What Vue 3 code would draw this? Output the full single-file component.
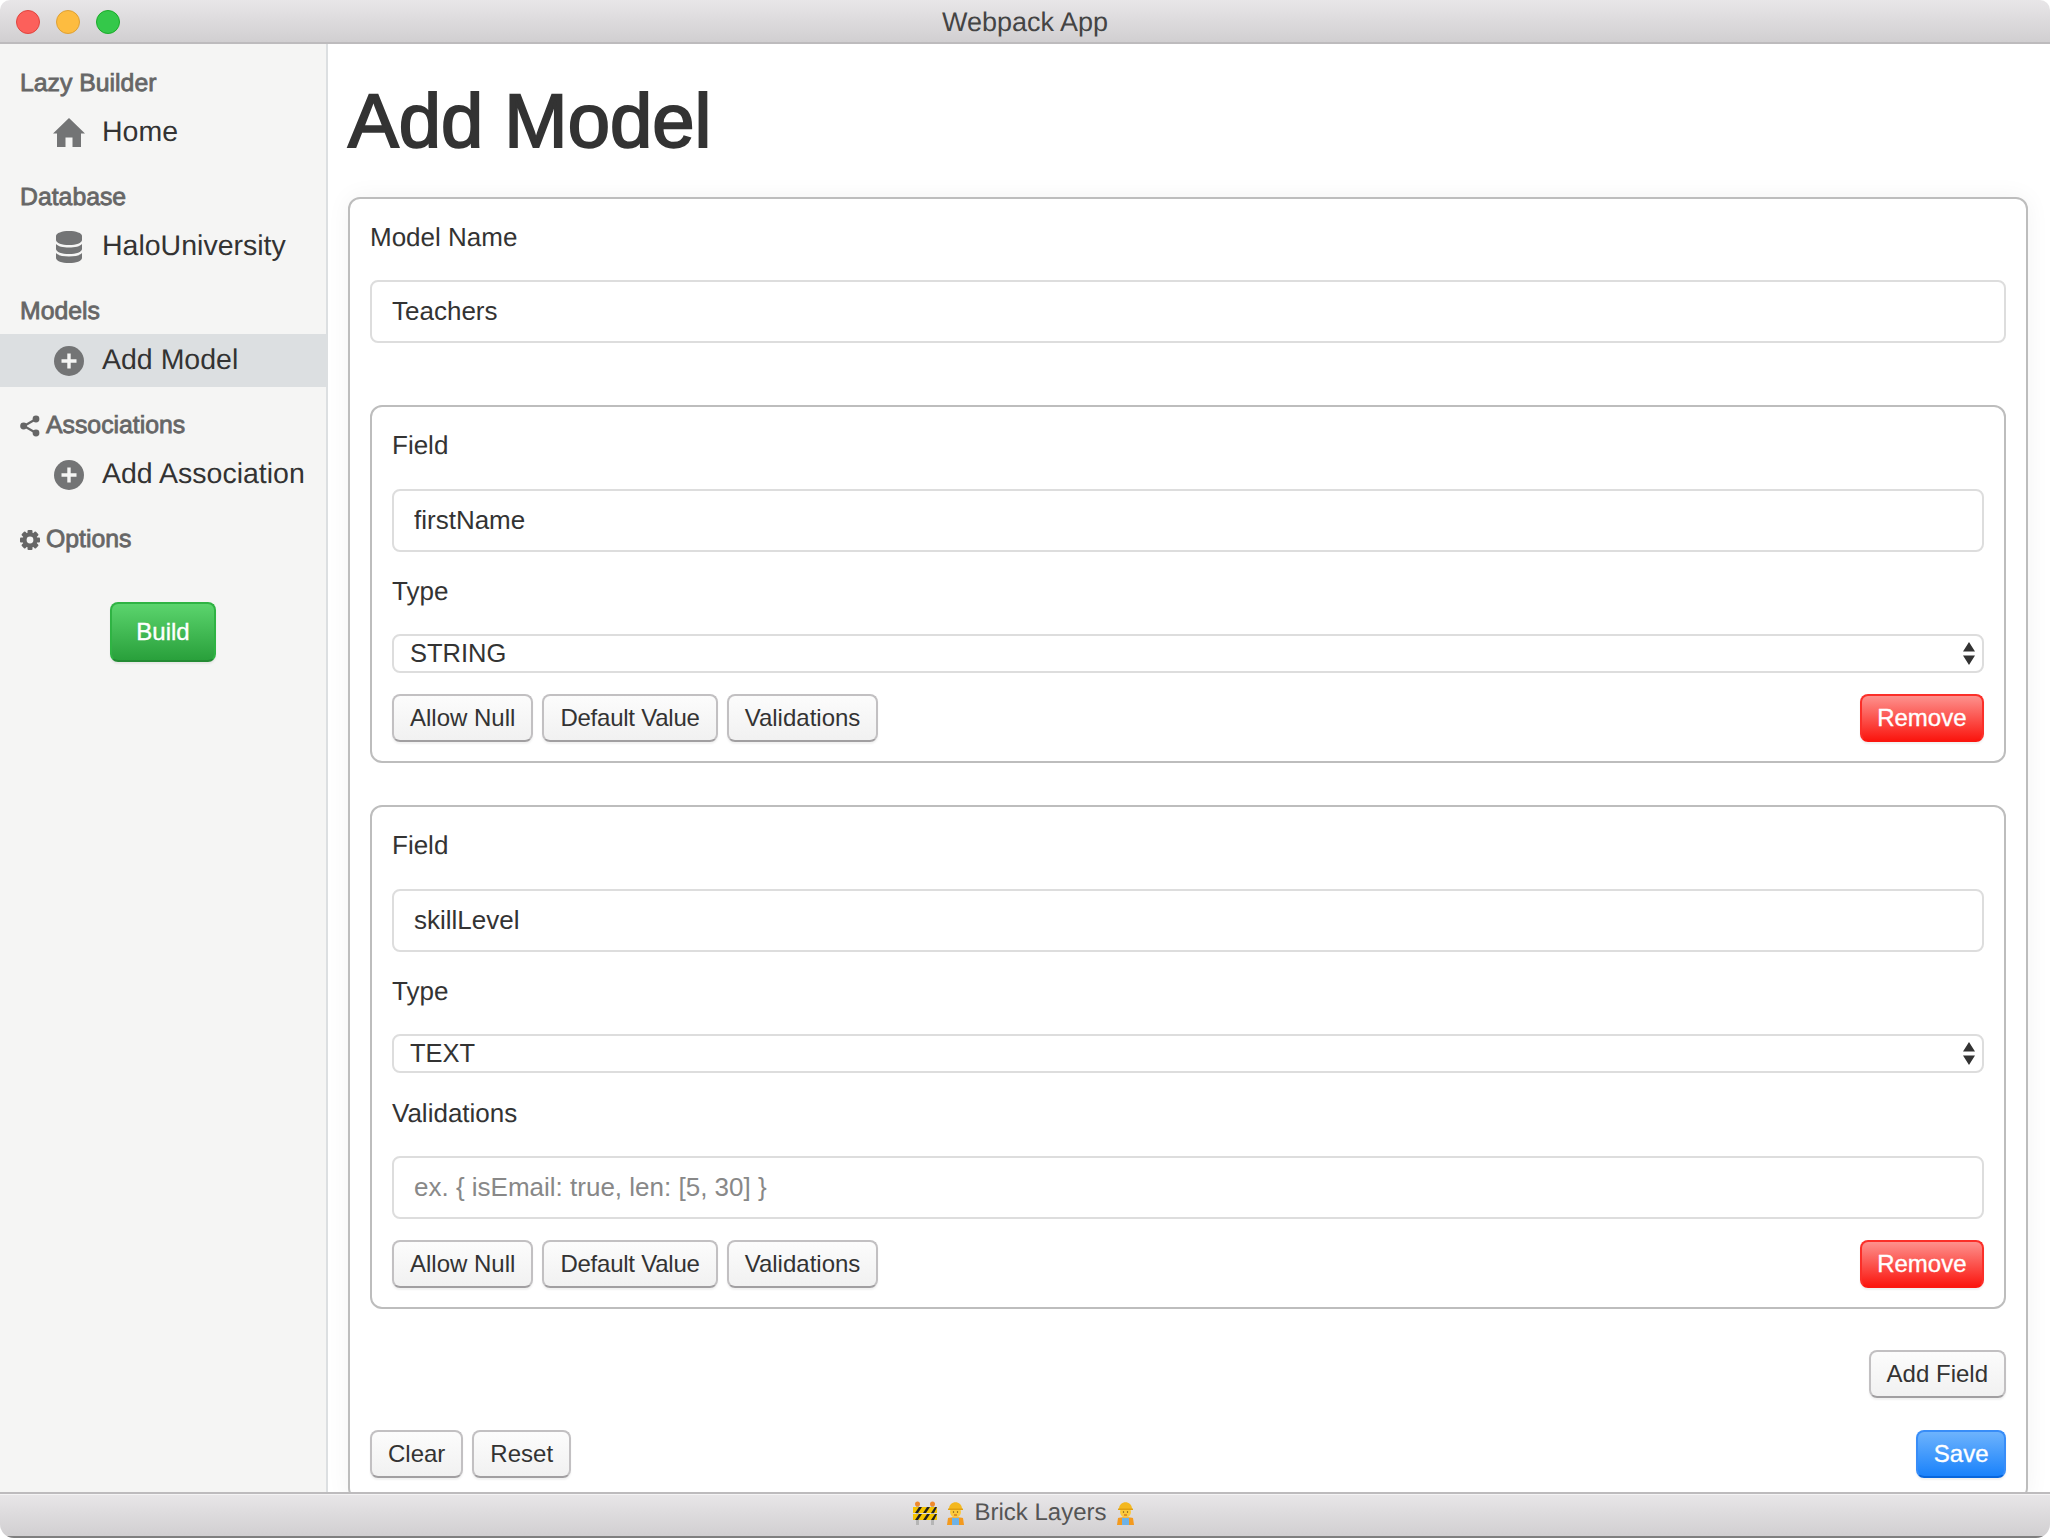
<script setup>
const groups = [
  { title: 'Lazy Builder', items: [{ label: 'Home', icon: 'home' }] },
  { title: 'Database', items: [{ label: 'HaloUniversity', icon: 'db' }] },
  { title: 'Models', items: [{ label: 'Add Model', icon: 'plus', active: true }] },
  { title: 'Associations', titleIcon: 'share', items: [{ label: 'Add Association', icon: 'plus' }] },
  { title: 'Options', titleIcon: 'gear', items: [] }
]
const fields = [
  { name: 'firstName', type: 'STRING', validations: false },
  { name: 'skillLevel', type: 'TEXT', validations: true }
]
const teeth = [0, 45, 90, 135]
</script>

<template>
  <div class="window">
    <header class="titlebar">
      <div class="lights">
        <span class="light red"></span>
        <span class="light yellow"></span>
        <span class="light green"></span>
      </div>
      <span class="wintitle">Webpack App</span>
    </header>

    <div class="body">
      <aside class="sidebar">
        <section v-for="g in groups" :key="g.title" class="group">
          <h5 class="gtitle">
            <svg v-if="g.titleIcon === 'share'" class="ticon" viewBox="0 0 20 22" width="20" height="22">
              <path d="M16 4 4 11 16 18" fill="none" stroke="#666" stroke-width="2.2" />
              <circle cx="16" cy="4" r="3.4" fill="#666" />
              <circle cx="3.6" cy="11" r="3.4" fill="#666" />
              <circle cx="16" cy="18" r="3.4" fill="#666" />
            </svg>
            <svg v-if="g.titleIcon === 'gear'" class="ticon" viewBox="0 0 20 20" width="20" height="20">
              <rect v-for="a in teeth" :key="a" x="7.5" y="0" width="5" height="20" rx="1" fill="#666" :transform="`rotate(${a} 10 10)`" />
              <circle cx="10" cy="10" r="7.4" fill="#666" />
              <circle cx="10" cy="10" r="3.4" fill="#f5f5f4" />
            </svg>
            {{ g.title }}
          </h5>
          <a v-for="it in g.items" :key="it.label" class="item" :class="{ active: it.active }">
            <span class="iconbox">
              <svg v-if="it.icon === 'home'" viewBox="0 0 32 29" width="32" height="29">
                <path d="M16 0 32 15.5H28V29H19.5V19.5H12.5V29H4V15.5H0Z" fill="#737475" />
              </svg>
              <svg v-else-if="it.icon === 'db'" viewBox="0 0 26 32" width="26" height="32">
                <path d="M0 5C0 2 6 0 13 0S26 2 26 5V9C26 12 20 14 13 14S0 12 0 9Z" fill="#737475" />
                <path d="M0 13C2 15.500 7 16.500 13 16.500S24 15.500 26 13V18C26 21 20 23 13 23S0 21 0 18Z" fill="#737475" />
                <path d="M0 22C2 24.500 7 25.500 13 25.500S24 24.500 26 22V27C26 30 20 32 13 32S0 30 0 27Z" fill="#737475" />
              </svg>
              <svg v-else viewBox="0 0 30 30" width="30" height="30">
                <circle cx="15" cy="15" r="15" fill="#737475" />
                <path d="M15 7.500V22.500M7.500 15H22.500" stroke="#f5f5f4" stroke-width="3.400" />
              </svg>
            </span>
            <span>{{ it.label }}</span>
          </a>
        </section>
        <button class="btn build">Build</button>
      </aside>

      <main class="main">
        <h1 class="heading">Add Model</h1>
        <div class="card">
          <label class="label">Model Name</label>
          <input class="input" value="Teachers" />

          <div v-for="f in fields" :key="f.name" class="field">
            <label class="label">Field</label>
            <input class="input" :value="f.name" />
            <label class="label">Type</label>
            <div class="selectwrap">
              <select class="select"><option>{{ f.type }}</option></select>
              <svg class="arrows" viewBox="0 0 12 23" width="12" height="23">
                <path d="M6 0 12 9.500H0Z M0 13.500H12L6 23Z" fill="#333" />
              </svg>
            </div>
            <template v-if="f.validations">
              <label class="label">Validations</label>
              <input class="input rule" placeholder="ex. { isEmail: true, len: [5, 30] }" />
            </template>
            <div class="actions">
              <button class="btn">Allow Null</button>
              <button class="btn tight">Default Value</button>
              <button class="btn">Validations</button>
              <button class="btn negative push">Remove</button>
            </div>
          </div>

          <div class="addrow"><button class="btn">Add Field</button></div>
          <div class="actions bottom">
            <button class="btn">Clear</button>
            <button class="btn">Reset</button>
            <button class="btn primary push">Save</button>
          </div>
        </div>
      </main>
    </div>

    <footer class="footer">
      <svg class="emoji" viewBox="0 0 24 24" width="24" height="24" role="img" aria-label="🚧">
        <rect x="3" y="3" width="3" height="21" fill="#b5b5b5" />
        <rect x="18" y="3" width="3" height="21" fill="#b5b5b5" />
        <circle cx="4.500" cy="3" r="2.500" fill="#f08a2c" />
        <circle cx="19.500" cy="3" r="2.500" fill="#f08a2c" />
        <rect x="0" y="6" width="24" height="6" fill="#f5c400" />
        <rect x="0" y="13" width="24" height="6" fill="#f5c400" />
        <path d="M2 12 6 6H9L5 12ZM10 12 14 6H17L13 12ZM18 12 22 6H24L21 12ZM2 19 6 13H9L5 19ZM10 19 14 13H17L13 19ZM18 19 22 13H24L21 19Z" fill="#222" />
      </svg>
      <svg class="emoji worker" viewBox="0 0 17 24" width="17" height="24" role="img" aria-label="👷">
        <path d="M1 17C3 16 14 16 16 17L17 24H0Z" fill="#f39a1f" />
        <rect x="5" y="17" width="7" height="7" fill="#6cb2e8" />
        <circle cx="8.500" cy="11" r="5.500" fill="#fbc93e" />
        <circle cx="6.500" cy="11" r=".7" fill="#6b4a10" />
        <circle cx="10.500" cy="11" r=".7" fill="#6b4a10" />
        <path d="M7 14H10" stroke="#c0561a" stroke-width="1" />
        <path d="M2 8C2 -1 15 -1 15 8Z" fill="#f4b81f" />
        <rect x="1" y="7.500" width="15" height="1.500" fill="#e0a010" />
      </svg>
      <span class="ftext">Brick Layers</span>
      <svg class="emoji worker" viewBox="0 0 17 24" width="17" height="24" role="img" aria-label="👷">
        <path d="M1 17C3 16 14 16 16 17L17 24H0Z" fill="#f39a1f" />
        <rect x="5" y="17" width="7" height="7" fill="#6cb2e8" />
        <circle cx="8.500" cy="11" r="5.500" fill="#fbc93e" />
        <circle cx="6.500" cy="11" r=".7" fill="#6b4a10" />
        <circle cx="10.500" cy="11" r=".7" fill="#6b4a10" />
        <path d="M7 14H10" stroke="#c0561a" stroke-width="1" />
        <path d="M2 8C2 -1 15 -1 15 8Z" fill="#f4b81f" />
        <rect x="1" y="7.500" width="15" height="1.500" fill="#e0a010" />
      </svg>
    </footer>
  </div>
</template>

<style>
html, body { margin: 0; background: #fff; }
</style>

<style scoped>
* { box-sizing: border-box; }
.window {
  width: 2050px; height: 1538px; display: flex; flex-direction: column; text-rendering: geometricPrecision;
  font-family: "Liberation Sans", Arial, sans-serif; color: #333; overflow: hidden;
  border-radius: 10px 10px 14px 14px; background: #fff;
}
.titlebar {
  height: 44px; flex: none; position: relative; display: flex; align-items: center; justify-content: center;
  background: linear-gradient(#e8e6e8, #d1cfd1); border-bottom: 2px solid #bdbbbd;
}
.lights { position: absolute; left: 16px; top: 10px; display: flex; gap: 16px; }
.light { width: 24px; height: 24px; border-radius: 50%; border: 1px solid; }
.red { background: #fc605b; border-color: #e0443e; }
.yellow { background: #fdbc40; border-color: #dea034; }
.green { background: #34c84a; border-color: #1aab29; }
.wintitle { font-size: 27px; color: #444; padding-top: 3px; }
.body { flex: 1; display: flex; min-height: 0; }
.sidebar {
  width: 328px; flex: none; background: #f5f5f4; border-right: 2px solid #dcdfe1; padding-top: 22px;
  display: flex; flex-direction: column;
}
.group { margin-bottom: 21px; }
.gtitle {
  margin: 0 0 4px; padding-left: 20px; height: 36px; display: flex; align-items: center; gap: 6px;
  font-size: 24.800px; font-weight: 400; color: #666; -webkit-text-stroke: .8px #666;
}
.ticon { flex: none; }
.item { height: 53px; display: flex; align-items: center; font-size: 28.500px; color: #333; width: 328px; }
.item.active { background: #dcdfe1; }
.iconbox { width: 102px; padding-left: 36px; display: flex; justify-content: center; }
.btn {
  height: 48px; padding: 0 16px; font: 24px/1 "Liberation Sans", Arial, sans-serif; color: #333; white-space: nowrap;
  border: 2px solid #c2c0c2; border-bottom-color: #a19fa1; border-radius: 8px;
  background: linear-gradient(#fcfcfc, #f1f1f1); box-shadow: 0 2px 2px rgba(0,0,0,.06);
}
.tight { letter-spacing: -.23px; }
.build {
  align-self: center; margin-top: 19px; width: 106px; height: 60px; padding: 0; color: #fff; -webkit-text-stroke: .35px #fff;
  background: linear-gradient(#5bd46d, #29a03b); border-color: #2fb343 #2fb343 #248b34;
}
.negative {
  color: #fff; -webkit-text-stroke: .35px #fff; background: linear-gradient(#fd918d, #fb1710);
  border-color: #fb2f29 #fb2f29 #fb1710; padding: 0 15.500px;
}
.primary {
  color: #fff; -webkit-text-stroke: .35px #fff; background: linear-gradient(#6db3fd, #1a82fb);
  border-color: #388df8 #388df8 #0866dc; padding: 0 15.500px;
}
.main { flex: 1; min-width: 0; background: #fff; padding: 0 22px 0 20px; overflow: hidden; }
.heading {
  margin: 0; height: 153px; padding-top: 35px; font-size: 76px; line-height: 86px; font-weight: 400; color: #333;
  -webkit-text-stroke: 2px #333;
}
.card {
  border: 2px solid #bdbdbd; border-radius: 12px; padding: 19px 20px 20px; background: #fff;
  box-shadow: 0 0 24px rgba(0,0,0,.05);
}
.label { display: block; font-size: 26px; line-height: 38px; margin-bottom: 24px; color: #333; }
.input {
  display: block; width: 100%; height: 63px; padding: 0 20px; font: 26px "Liberation Sans", Arial, sans-serif; color: #333;
  border: 2px solid #ddd; border-radius: 8px; background: #fff; outline: none; margin-bottom: 20px;
}
.input.rule { margin-bottom: 21px; }
.input::placeholder { color: #888; opacity: 1; }
.selectwrap { position: relative; margin-bottom: 21px; }
.select {
  display: block; width: 100%; height: 39px; padding: 0 16px 2px; font: 25.500px "Liberation Sans", Arial, sans-serif; color: #333;
  border: 2px solid #ddd; border-radius: 8px; background: #fff; appearance: none; -webkit-appearance: none; outline: none;
}
.arrows { position: absolute; right: 9px; top: 8px; }
.field {
  border: 2px solid #bdbdbd; border-radius: 12px; padding: 19px 20px 19px; margin-top: 42px;
}
.field > .label:first-child { margin-bottom: 25px; }
.card > .input { margin-bottom: 62px; }
.card > .field:first-of-type { margin-top: 0; }
.actions { display: flex; gap: 9px; }
.push { margin-left: auto; }
.addrow { display: flex; justify-content: flex-end; margin-top: 41px; }
.bottom { margin-top: 32px; }
.footer {
  height: 46px; flex: none; display: flex; align-items: center; justify-content: center; gap: 10px; padding: 0 3px 4px 0;
  border-top: 2px solid #bdbbbd; border-bottom: 2px solid #7f7f7f; background: linear-gradient(#e8e6e8, #d1cfd1);
  box-shadow: inset 0 1px 0 #f4f3f4; position: relative;
}
.ftext { font-size: 24px; color: #555; }
.emoji { flex: none; }
</style>
